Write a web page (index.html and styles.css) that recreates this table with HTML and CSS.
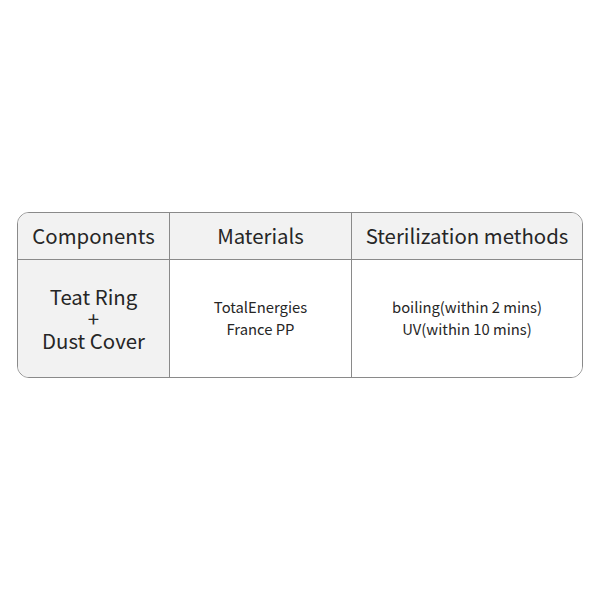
FILE: index.html
```html
<!DOCTYPE html>
<html>
<head>
<meta charset="utf-8">
<link rel="stylesheet" href="styles.css">
</head>
<body>
<div class="page">
  <div class="table">
    <div class="cell head">Components</div>
    <div class="cell head">Materials</div>
    <div class="cell head last">Sterilization methods</div>
    <div class="cell body first">
      <div class="line">Teat Ring</div>
      <div class="line">+</div>
      <div class="line">Dust Cover</div>
    </div>
    <div class="cell body small">
      <div class="line">TotalEnergies</div>
      <div class="line">France PP</div>
    </div>
    <div class="cell body small last">
      <div class="line">boiling(within 2 mins)</div>
      <div class="line">UV(within 10 mins)</div>
    </div>
  </div>
</div>
</body>
</html>
```
FILE: styles.css
```css
html, body {
  margin: 0;
  padding: 0;
  background: #ffffff;
}
.page {
  width: 600px;
  height: 600px;
  padding: 212px 0 0 17px;
  box-sizing: border-box;
}
.table {
  width: 566px;
  height: 166px;
  box-sizing: border-box;
  border: 1px solid #8a8a8a;
  border-radius: 12px;
  overflow: hidden;
  display: grid;
  grid-template-columns: 152px 182px 1fr;
  grid-template-rows: 47px 1fr;
  font-family: "Noto Sans CJK SC", "Noto Sans", sans-serif;
  color: #262626;
}
.cell {
  display: flex;
  flex-direction: column;
  align-items: center;
  justify-content: center;
  text-align: center;
  border-right: 1px solid #8a8a8a;
  padding-bottom: 2px;
}
.cell.last {
  border-right: none;
}
.head {
  background: #f2f2f2;
  font-size: 20.4px;
  border-bottom: 1px solid #8a8a8a;
}
.body {
  background: #ffffff;
  font-size: 20.4px;
}
.line {
  height: 22px;
  line-height: 22px;
  white-space: nowrap;
}
.body.first {
  background: #f2f2f2;
}
.body.small {
  font-size: 14.8px;
}
```
